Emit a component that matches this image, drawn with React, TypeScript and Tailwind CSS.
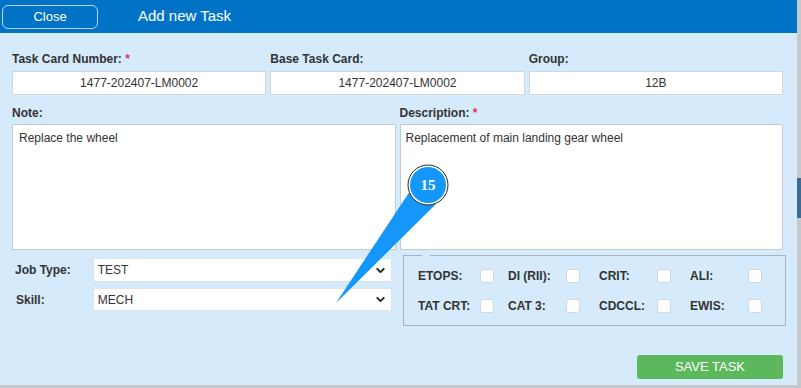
import React from 'react';
import { ChevronDown } from 'lucide-react';

const font = { fontFamily: '"Liberation Sans", Arial, sans-serif' };

const Label: React.FC<{ text: string; required?: boolean }> = ({ text, required }) => (
  <div className="h-[14px] text-[12px] leading-[14px] font-bold text-[#333]">
    {text}
    {required && <span className="text-[#e0365a]"> *</span>}
  </div>
);

const TextBox: React.FC<{ value: string }> = ({ value }) => (
  <div className="mt-[5px] h-[24px] border border-[#cfd6dc] bg-white flex items-center justify-center text-[12px] text-[#333]">
    {value}
  </div>
);

const Select: React.FC<{ value: string; className?: string }> = ({ value, className }) => (
  <div
    className={`w-[300px] border border-[#dde3e8] bg-white flex items-center justify-between pl-[4px] pr-[4px] text-[12px] text-[#333] ${className ?? ''}`}
  >
    <span>{value}</span>
    <ChevronDown className="w-[13px] h-[13px] text-[#222]" strokeWidth={3.5} />
  </div>
);

const Check: React.FC<{ label: string; first?: boolean }> = ({ label, first }) => (
  <div className="flex items-center h-[20px]">
    <span className={`${first ? 'w-[62px]' : 'w-[58px]'} text-[12px] font-bold text-[#333]`}>{label}</span>
    <span className="w-[14px] h-[14px] rounded-[3px] border border-[#d2d7db] bg-white" />
  </div>
);

const App: React.FC = () => {
  return (
    <div className="w-[801px] h-[388px] bg-[#c6c9cc] overflow-hidden relative" style={font}>
      <div className="w-[797px] h-[385px] bg-[#d5ebfc] flex flex-col relative">
        {/* Header */}
        <div className="h-[33px] bg-[#0173c7] flex items-center">
          <button className="ml-[2px] w-[96px] h-[24px] rounded-[6px] border border-[#b9d4ee] text-white text-[13px]">
            Close
          </button>
          <span className="ml-[40px] text-white text-[15px]">Add new Task</span>
        </div>

        {/* Body */}
        <div className="pl-[12px] pr-[14px] pt-[19px] flex flex-col">
          <div className="grid grid-cols-3 gap-x-[4px]">
            <div>
              <Label text="Task Card Number:" required />
              <TextBox value="1477-202407-LM0002" />
            </div>
            <div>
              <Label text="Base Task Card:" />
              <TextBox value="1477-202407-LM0002" />
            </div>
            <div>
              <Label text="Group:" />
              <TextBox value="12B" />
            </div>
          </div>

          <div className="grid grid-cols-2 gap-x-[4px] mt-[11px]">
            <div>
              <Label text="Note:" />
              <div className="mt-[4px] h-[126px] border border-[#c3cbd2] bg-white px-[6px] pt-[4px] text-[12px] text-[#333]">
                Replace the wheel
              </div>
            </div>
            <div>
              <Label text="Description:" required />
              <div className="mt-[4px] h-[126px] border border-[#c3cbd2] bg-white px-[5px] pt-[4px] text-[12px] text-[#333]">
                Replacement of main landing gear wheel
              </div>
            </div>
          </div>

          <div className="flex">
            <div className="w-[380px] shrink-0 mt-[8px] flex flex-col gap-[6px]">
              <div className="flex items-center">
                <span className="ml-[3px] w-[78px] text-[12px] font-bold text-[#333]">Job Type:</span>
                <Select value="TEST" className="h-[24px]" />
              </div>
              <div className="flex items-center">
                <span className="ml-[4px] w-[77px] text-[12px] font-bold text-[#333]">Skill:</span>
                <Select value="MECH" className="h-[23px]" />
              </div>
            </div>
            <fieldset className="shrink-0 ml-[11px] mt-[5px] w-[383px] border border-[#a9b4bd] pl-[14px] pt-[10px] pb-[9px]">
              <legend className="ml-[4px] w-[8px] h-0 p-0" />
              <div className="grid grid-cols-[90px_91px_91px_91px] gap-y-[10px]">
                <Check label="ETOPS:" first />
                <Check label="DI (RII):" />
                <Check label="CRIT:" />
                <Check label="ALI:" />
                <Check label="TAT CRT:" first />
                <Check label="CAT 3:" />
                <Check label="CDCCL:" />
                <Check label="EWIS:" />
              </div>
            </fieldset>
          </div>

          <div className="flex justify-end mt-[29px]">
            <button className="w-[146px] h-[24px] rounded-[3px] bg-[#5cb85c] text-white text-[13px]">
              SAVE TASK
            </button>
          </div>
        </div>

        {/* Callout */}
        <svg className="absolute left-0 top-0 pointer-events-none" width="797" height="385">
          <polygon points="336,303 410,191 436,204" fill="#1597fa" />
          <circle cx="428" cy="185" r="20" fill="#ffffff" stroke="#2a2a2a" strokeWidth="1" />
          <circle cx="428" cy="185" r="18" fill="#1597fa" />
          <text
            x="428"
            y="190"
            textAnchor="middle"
            fill="#ffffff"
            fontSize="15"
            fontWeight="bold"
            fontFamily='"Liberation Serif", "Times New Roman", serif'
          >
            15
          </text>
        </svg>
      </div>
      <div className="absolute right-0 top-[178px] w-[4px] h-[40px] bg-[#3b6c96]" />
    </div>
  );
};

export default App;
